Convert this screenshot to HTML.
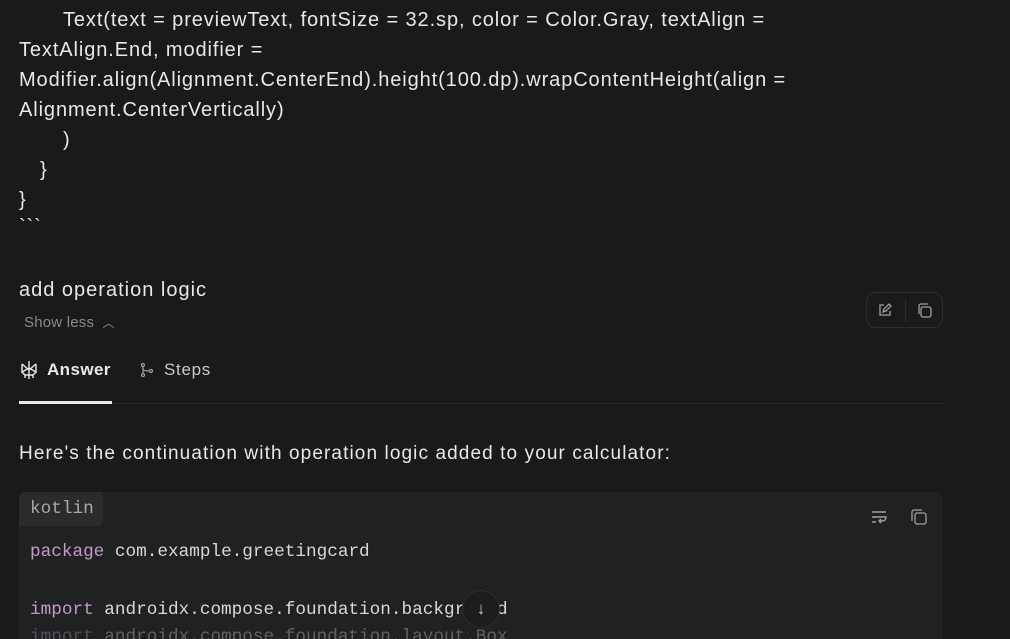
<!DOCTYPE html>
<html><head><meta charset="utf-8"><style>
*{margin:0;padding:0;box-sizing:border-box}
html,body{width:1010px;height:639px;overflow:hidden}
body{background:#191a1a;font-family:"Liberation Sans",sans-serif;color:#e8e8e6;position:relative}
.t{position:absolute;font-size:20px;letter-spacing:0.9px;white-space:nowrap;line-height:30px}
.mono{font-family:"Liberation Mono",monospace;font-size:17.7px;position:absolute;white-space:nowrap;color:#d8d8d6}
.kw{color:#c39ac9}
</style></head><body>
<div class="t" style="left:63px;top:5px">Text(text = previewText, fontSize = 32.sp, color = Color.Gray, textAlign =</div>
<div class="t" style="left:19px;top:35px">TextAlign.End, modifier =</div>
<div class="t" style="left:19px;top:65px">Modifier.align(Alignment.CenterEnd).height(100.dp).wrapContentHeight(align =</div>
<div class="t" style="left:19px;top:95px">Alignment.CenterVertically)</div>
<div class="t" style="left:63px;top:125px">)</div>
<div class="t" style="left:40px;top:155px">}</div>
<div class="t" style="left:19px;top:185px">}</div>
<div class="t" style="left:19px;top:212px">&#96;&#96;&#96;</div>

<div class="t" style="left:19px;top:275px;font-size:20px;letter-spacing:1px">add operation logic</div>
<div class="t" style="left:24px;top:308px;font-size:15px;letter-spacing:0.2px;color:#8a8b89">Show less <span style="font-size:12px;margin-left:4px">︿</span></div>

<div style="position:absolute;left:866px;top:292px;width:77px;height:36px;border:1px solid #2c2e2e;border-radius:10px"></div>
<div style="position:absolute;left:905px;top:298px;width:1px;height:24px;background:#2c2e2e"></div>
<svg style="position:absolute;left:877px;top:302px" width="16" height="16" viewBox="0 0 16 16" fill="none" stroke="#a0a19f" stroke-width="1.3"><path d="M7 3H3v10h10V9"/><path d="M6 10l1-3 5-5 2 2-5 5z"/></svg>
<svg style="position:absolute;left:916px;top:302px" width="17" height="17" viewBox="0 0 17 17" fill="none" stroke="#a0a19f" stroke-width="1.3"><rect x="5" y="5" width="10" height="10" rx="2"/><path d="M3 12V4a2 2 0 0 1 2-2h7"/></svg>

<svg style="position:absolute;left:19px;top:360px" width="20" height="20" viewBox="0 0 20 20" fill="none" stroke="#e8e8e6" stroke-width="1.4"><path d="M10 1v18M3 4l7 6 7-6M3 4v8l7-4 7 4V4M3 12l3 3h8l3-3M6 15v3M14 15v3"/></svg>
<div class="t" style="left:47px;top:355px;font-size:17px;letter-spacing:0.4px;font-weight:bold">Answer</div>
<svg style="position:absolute;left:140px;top:363px" width="14" height="14" viewBox="0 0 14 14" fill="none" stroke="#a0a19f" stroke-width="1.2"><circle cx="3" cy="2" r="1.5"/><circle cx="3" cy="12" r="1.5"/><circle cx="11" cy="8" r="1.5"/><path d="M3 3.5v7M3 6q0 2 6.5 2"/></svg>
<div class="t" style="left:164px;top:355px;font-size:17px;letter-spacing:0.7px;color:#c8c9c7">Steps</div>
<div style="position:absolute;left:19px;top:403px;width:924px;height:1px;background:#272929"></div>
<div style="position:absolute;left:19px;top:401px;width:93px;height:3px;background:#e8e8e6"></div>

<div class="t" style="left:19px;top:439px;font-size:19px;letter-spacing:1.1px">Here's the continuation with operation logic added to your calculator:</div>

<div style="position:absolute;left:19px;top:492px;width:924px;height:160px;background:#202222;border-radius:6px"></div>
<div style="position:absolute;left:19px;top:492px;width:84px;height:34px;background:#2a2c2c;border-radius:6px 0 6px 0"></div>
<div class="mono" style="left:30px;top:499px;color:#a8a9a7">kotlin</div>
<svg style="position:absolute;left:870px;top:509px" width="18" height="16" viewBox="0 0 18 16" fill="none" stroke="#a0a19f" stroke-width="1.4"><path d="M2 3h14M2 8h14q0 4-4 4h-3M11 10l-2 2 2 2M2 13h4"/></svg>
<svg style="position:absolute;left:910px;top:508px" width="18" height="18" viewBox="0 0 18 18" fill="none" stroke="#a0a19f" stroke-width="1.3"><rect x="5" y="5" width="11" height="11" rx="2"/><path d="M2 13V4a2 2 0 0 1 2-2h8"/></svg>
<div class="mono" style="left:30px;top:542px"><span class="kw">package</span> com.example.greetingcard</div>
<div class="mono" style="left:30px;top:600px"><span class="kw">import</span> androidx.compose.foundation.background</div>
<div class="mono" style="left:30px;top:627px;opacity:.35"><span class="kw">import</span> androidx.compose.foundation.layout.Box</div>
<div style="position:absolute;left:462px;top:590px;width:38px;height:38px;border-radius:50%;background:#1c1e1e;border:1px solid #2e3030;color:#c8c9c7;font-size:17px;text-align:center;line-height:36px">↓</div>
</body></html>
